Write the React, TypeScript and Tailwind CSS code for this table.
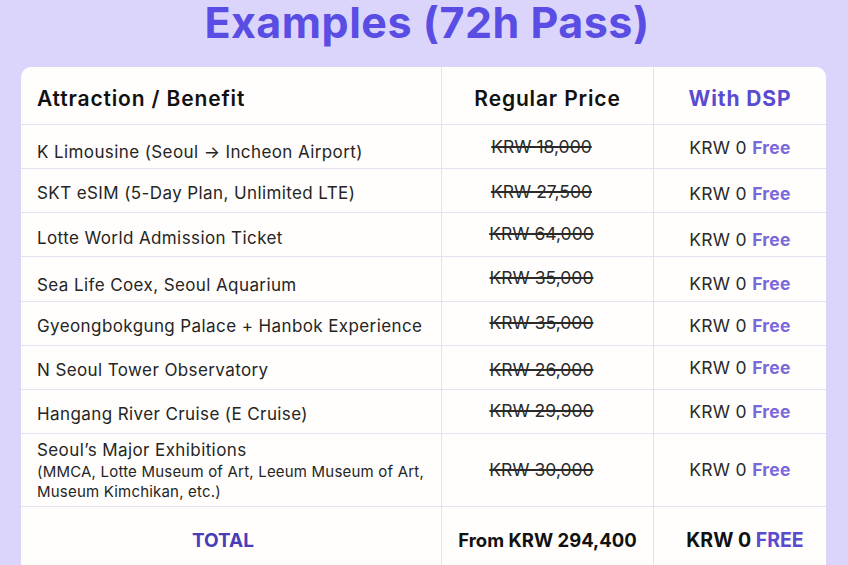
import React from "react";

const rows: { name: React.ReactNode; price: string; h: string; nameClass?: string; priceClass?: string; freeClass?: string }[] = [
  { name: "K Limousine (Seoul → Incheon Airport)", price: "KRW 18,000", h: "h-[44px]", nameClass: "pt-[13px]", priceClass: "pt-[2px]", freeClass: "pt-[4px]" },
  { name: "SKT eSIM (5-Day Plan, Unlimited LTE)", price: "KRW 27,500", h: "h-[44px]", nameClass: "pt-[7px]", priceClass: "pt-[4px]", freeClass: "pt-[7px]" },
  { name: "Lotte World Admission Ticket", price: "KRW 64,000", h: "h-[44px]", nameClass: "pt-[9px]", priceClass: "pt-[0px]", freeClass: "pt-[12px]" },
  { name: "Sea Life Coex, Seoul Aquarium", price: "KRW 35,000", h: "h-[45px]", nameClass: "pt-[13px]", priceClass: "pb-[2px]", freeClass: "pt-[11px]" },
  { name: "Gyeongbokgung Palace + Hanbok Experience", price: "KRW 35,000", h: "h-[44px]", nameClass: "pt-[6px]", priceClass: "pt-[0px]", freeClass: "pt-[6px]" },
  { name: "N Seoul Tower Observatory", price: "KRW 26,000", h: "h-[44px]", nameClass: "pt-[6px]", priceClass: "pt-[6px]", freeClass: "pt-[2px]" },
  { name: "Hangang River Cruise (E Cruise)", price: "KRW 29,900", h: "h-[44px]", nameClass: "pt-[6px]", priceClass: "pt-[0px]", freeClass: "pt-[2px]" },
];

const font = "font-['Inter','Liberation_Sans',sans-serif]";

export default function App() {
  return (
    <div className={`w-[848px] h-[565px] overflow-hidden bg-[#dcd5fb] ${font}`}>
      <h1 className="h-[67px] text-center text-[43px] leading-[44px] font-bold tracking-[0.5px] pl-[6px] text-[#5a4de3]">
        Examples (72h Pass)
      </h1>
      <div className="ml-[21px] w-[805px] bg-[#fffefc] rounded-t-[10px] grid grid-cols-[421px_212px_172px] text-[#252525]">
        {/* header */}
        <div className="h-[58px] flex items-center pl-[16px] pt-[7px] border-r border-b border-[#e5e1f2] text-[21px] tracking-[0.85px] font-semibold text-[#111]">
          Attraction / Benefit
        </div>
        <div className="h-[58px] flex items-center justify-center pt-[7px] border-r border-b border-[#e5e1f2] text-[21px] tracking-[0.85px] font-semibold text-[#111]">
          Regular Price
        </div>
        <div className="h-[58px] flex items-center justify-center pt-[7px] border-b border-[#e5e1f2] text-[21px] tracking-[0.9px] font-bold text-[#5a4bd0]">
          With DSP
        </div>

        {rows.map((r, i) => (
          <React.Fragment key={i}>
            <div className={`${r.h} flex items-center pl-[16px] border-r border-b border-[#e5e1f2] text-[17px] tracking-[0.4px] ${r.nameClass ?? ""}`}>
              {r.name}
            </div>
            <div className={`${r.h} flex items-center justify-center pr-[12px] border-r border-b border-[#e5e1f2] text-[17.5px] line-through decoration-[1.5px] text-[#2a2a2a] ${r.priceClass ?? ""}`}>
              {r.price}
            </div>
            <div className={`${r.h} flex items-center justify-center border-b border-[#e5e1f2] text-[17.5px] tracking-[0.3px] ${r.freeClass ?? ""}`}>
              <span className="text-[#2a2a2a]">KRW 0&nbsp;</span>
              <span className="font-bold text-[#7b68db]">Free</span>
            </div>
          </React.Fragment>
        ))}

        {/* exhibitions */}
        <div className="h-[73px] flex flex-col justify-center pl-[16px] border-r border-b border-[#e5e1f2]">
          <div className="text-[17px] tracking-[0.4px] leading-[22px]">Seoul’s Major Exhibitions</div>
          <div className="text-[15px] tracking-[0.2px] leading-[21px]">(MMCA, Lotte Museum of Art, Leeum Museum of Art,</div>
          <div className="text-[15px] tracking-[0.2px] leading-[20px]">Museum Kimchikan, etc.)</div>
        </div>
        <div className="h-[73px] flex items-center justify-center pr-[12px] border-r border-b border-[#e5e1f2] text-[17.5px] line-through decoration-[1.5px] text-[#2a2a2a]">
          KRW 30,000
        </div>
        <div className="h-[73px] flex items-center justify-center border-b border-[#e5e1f2] text-[17.5px] tracking-[0.3px]">
          <span className="text-[#2a2a2a]">KRW 0&nbsp;</span>
          <span className="font-bold text-[#7b68db]">Free</span>
        </div>

        {/* total */}
        <div className="h-[66px] flex items-center justify-center pr-[16px] pt-[2px] border-r border-[#e5e1f2] text-[19px] font-bold text-[#4a3db8]">
          TOTAL
        </div>
        <div className="h-[66px] flex items-center justify-center pt-[2px] border-r border-[#e5e1f2] text-[18.5px] font-bold text-[#111]">
          From KRW 294,400
        </div>
        <div className="h-[66px] flex items-center justify-center pt-[2px] pl-[10px] text-[19.5px] font-bold text-[#111]">
          KRW 0&nbsp;<span className="text-[#5a4bd0]">FREE</span>
        </div>
      </div>
    </div>
  );
}
